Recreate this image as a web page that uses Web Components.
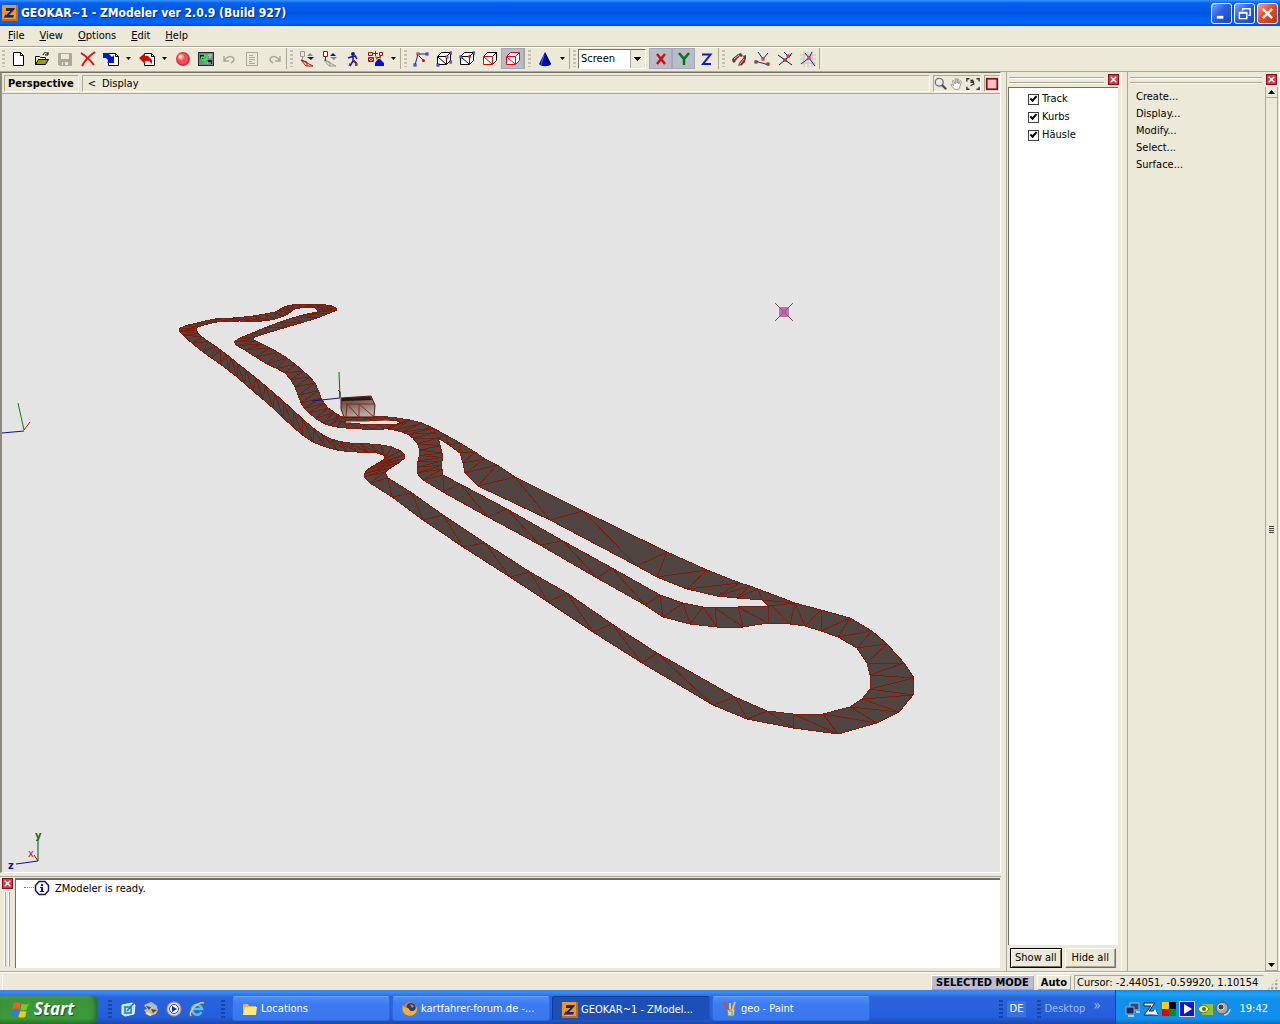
<!DOCTYPE html>
<html lang="en">
<head>
<meta charset="utf-8">
<title>GEOKAR~1 - ZModeler ver 2.0.9 (Build 927)</title>
<style>
  html, body { height: 100%; }
  body {
    margin: 0;
    font: 11px/14px "DejaVu Sans Condensed", "Noto Sans", sans-serif;
    color: #000;
    background: #ece9d8;
    overflow: hidden;
  }
</style>
</head>
<body>
<app-shell>
  <title-bar slot="title">GEOKAR~1 - ZModeler ver 2.0.9 (Build 927)</title-bar>
  <menu-bar slot="menu" items="File,View,Options,Edit,Help"></menu-bar>
  <tool-bar slot="tools"></tool-bar>
  <view-port slot="view"></view-port>
  <message-log slot="log">ZModeler is ready.</message-log>
  <dock-panel slot="objects">
    <object-list>
      <check-item>Track</check-item>
      <check-item>Kurbs</check-item>
      <check-item>Häusle</check-item>
    </object-list>
  </dock-panel>
  <dock-panel slot="commands">
    <command-list items="Create...,Display...,Modify...,Select...,Surface..."></command-list>
  </dock-panel>
  <status-bar slot="status"></status-bar>
  <task-bar slot="taskbar"></task-bar>
</app-shell>

<script>
// Base class: attaches an open root and fills it
class BaseElement extends HTMLElement {
  constructor() {
    super();
    this.attachShadow({ mode: 'open' });
  }

  connectedCallback() {
    this.shadowRoot.innerHTML = this.render();
  }
}

const ARROW = (x, y) => `<path d="M${x} ${y}h5l-2.5 3z" fill="#000"/>`;
const CUBE = (front, back) => `
  <path d="M1.500 5.500l4-4h9v8l-4 4M10.500 5.500l4-4" fill="#fff" stroke="${back}"/>
  <path d="M1.500 5.500h9v8h-9z" fill="#fff" stroke="${front}"/>
  <path d="M2 6l8 7" stroke="${front}"/>`;
const NODE = (x, y, c) => `<rect x="${x}" y="${y}" width="2" height="2" fill="#fff" stroke="${c}"/>`;
const ZLOGO = `
  <rect width="16" height="16" fill="#f09a1c"/>
  <path d="M0 14h16v2H0zM14 0h2v16h-2z" fill="#c86a10"/>
  <path d="M4 3h9l-1 2-5 5h5l-1 3H2l1-3 5-4H4z" fill="#20206c"/>
  <path d="M3 13h8M8 6l-4 4" stroke="#d8c8e0" stroke-width=".6"/>`;

const ICONS = {
  app: ZLOGO,
  new: '<path d="M2.500 1.500h7l3 3v10h-10zM9.500 1.500v3h3" fill="#fff" stroke="#000"/>',
  open: `<path d="M1.500 13.500v-8h4l1 1h5v2" fill="#ffffa0" stroke="#000"/>
    <path d="M1.500 13.500l3-5h10l-3 5z" fill="#9a9a18" stroke="#000"/>
    <path d="M9 4c1-3 3-3 5-1m0-2v3h-3" fill="none" stroke="#000"/>`,
  save: `<path d="M1.500 2.500h13v12h-12l-1-1z" fill="#aca899" stroke="#aca899"/>
    <path d="M4 3h8v5H4zM5 11h6v3H5z" fill="#ece9d8"/><path d="M6 11h2v3H6z" fill="#aca899"/>`,
  delete: '<path d="M1 2c5 3 9 7 13 12M15 1C9 5 5 9 2 15" fill="none" stroke="#e01010" stroke-width="2"/>',
  import: `<path d="M5.500 2.500h7l3 3v9h-10zM12.500 2.500v3h3" fill="#fff" stroke="#000"/>
    <path d="M0 2h5l4 4 2-2v8H4l2-2-3-3H0z" fill="#0018d8"/>`,
  export: `<path d="M5.500 2.500h7l3 3v9h-10zM12.500 2.500v3h3" fill="#fff" stroke="#000"/>
    <path d="M0 7l6-5v3h3l4 4v4l-3-3H6v3z" fill="#d00808"/>`,
  sphere: `<circle cx="8" cy="8" r="7" fill="#d83040"/><circle cx="7.500" cy="7.500" r="5.500" fill="#ec5058"/>
    <circle cx="6" cy="6" r="3" fill="#f89090"/><circle cx="5.500" cy="5.500" r="1.500" fill="#fff0f0"/>`,
  picture: `<rect x=".5" y="1.500" width="15" height="13" fill="#788888" stroke="#202828"/>
    <path d="M2 4h5v4H2zM10 9h4v4h-4z" fill="#102810"/>
    <path d="M3 8l1-2 2 1 1-3 2 1v3H7v5M4 9h4" fill="none" stroke="#30e850" stroke-width="1.500"/>
    <path d="M10 4h4M11 6h2M9 12h4" stroke="#d0f0d0"/>`,
  undo: '<path d="M3 5v5h5M3 10c3-5 8-6 10-2 0 2-1 3-3 4" fill="none" stroke="#aca899" stroke-width="1.500"/>',
  doc: '<path d="M2.500 1.500h11v13h-11zM5 4.500h4M5 6.500h6M5 8.500h6M5 10.500h3M5 12.500h6" fill="none" stroke="#aca899"/>',
  redo: '<path d="M13 5v5H8M13 10C10 5 5 4 3 8c0 2 1 3 3 4" fill="none" stroke="#aca899" stroke-width="1.500"/>',
  local1: `<path d="M1.500.5h4v5h-4zM3.500 6v4" fill="none" stroke="#989898"/>
    <path d="M2 9l12 6H7L2 9l6 2v4" fill="none" stroke="#c01010"/>
    <path d="M8 5l3-3 3 3z" fill="#8088a0"/><path d="M8 6h7l-3 3z" fill="#101860"/>`,
  local2: `<path d="M2 9l12 6H7L2 9l6 2v4" fill="none" stroke="#989898"/>
    <path d="M1.500.5h4v5h-4zM3.500 6v4" fill="#fff" stroke="#a01010"/>
    <path d="M8 5l3-3 3 3z" fill="#101860"/><path d="M8 6h7l-3 3z" fill="#8088a0"/>`,
  figure: `<circle cx="8" cy="3" r="2" fill="#1818a0"/>
    <path d="M3 7l3-1 4-1 2 3M8 5v5l-3 5M8 10l3 2v3" fill="none" stroke="#1818a0" stroke-width="1.500"/>
    <path d="M10 4l2 3M9 9l3 3v3M5 12l-1 3" fill="none" stroke="#c01818"/>`,
  crowd: `<path d="M.5 1.500h4v3h-4zM7.500 0v5M5 2.500h5M11.500 1.500h3v3h-3zM.5 6.500h5v4h-5zM1 7l4 3M5 7l-4 3M7 6l6 1M8 8l5-3" fill="none" stroke="#b01010"/>
    <path d="M7 15v-3l3-4h2l4 4v3z" fill="#0010d0"/>`,
  verts: `<path d="M2 14L5 3h9M6 5l5 5" fill="none" stroke="#1020c0"/>
    ${NODE(4, 2, '#c01010')}${NODE(13, 2, '#1020c0')}${NODE(1, 13, '#1020c0')}<circle cx="10.500" cy="9.500" r="1.500" fill="#c01010"/>`,
  cube1: CUBE('#000', '#000') + NODE(10, 5, '#e01010') + NODE(1, 13, '#1020c0') + NODE(14, 1, '#1020c0') + NODE(14, 10, '#1020c0'),
  cube2: CUBE('#000', '#000') + '<path d="M10.500 6v8" stroke="#1020e0"/>' + NODE(14, 1, '#1020c0') + NODE(1, 5, '#1020c0') + '<circle cx="10.500" cy="5.500" r="1.500" fill="#e01010"/>',
  cube3: CUBE('#c01010', '#000'),
  cube4: CUBE('#e00818', '#e00818'),
  cone: '<path d="M8 1l6 12c-2 3-10 3-12 0z" fill="#0010b8"/><path d="M8 1l2 14 3-1 1-1z" fill="#000868"/><path d="M7 4l-3 10" stroke="#4868ff"/>',
  x: '<path d="M4 3l8 10M12 3L4 13" stroke="#d01010" stroke-width="2.500"/>',
  y: '<path d="M3 2l5 6 5-6M8 8v6" fill="none" stroke="#087018" stroke-width="2.500"/>',
  z: '<path d="M3 3.500h8.500L4 13h8" fill="none" stroke="#1018d0" stroke-width="2"/>',
  magnet: `<path d="M3 11L1 8l6-5 2 2zM8 12l5-6 2 1-1 4-4 4z" fill="#a02020"/>
    <path d="M7 3l3-1 2 3-2 1zM12 5l3-1v4l-2-1zM2 8l3 2-2 2-2-2z" fill="#484444"/>
    <path d="M3 8l5-4M9 13l4-5" stroke="#f0b0b0"/><path d="M7 15l3-1-2-2z" fill="#606060"/>`,
  snap1: `<path d="M1 10l14 4M4 1l5 7 5-6" fill="none" stroke="#1020a0"/>${NODE(8, 7, '#c01010')}${NODE(1, 10, '#601010')}${NODE(13, 12, '#601010')}`,
  snap2: `<path d="M1 4l14 10M2 14l12-10M7 1l5 5 3-4" fill="none" stroke="#101060"/>${NODE(10, 4, '#c01010')}${NODE(7, 8, '#801010')}`,
  snap3: `<path d="M0 4h16M0 8h16M0 12h16M4 0v16M8 0v16M12 0v16" stroke="#c4c4c0"/>
    <path d="M1 13l8-6 6 8M5 2l4 5 3-6" fill="none" stroke="#1020c0"/>${NODE(8, 6, '#e01010')}`,
  zoom: `<circle cx="6" cy="6" r="4.500" fill="#e8eef0" stroke="#707070" stroke-width="1.500"/>
    <path d="M9 9l5 5" stroke="#505050" stroke-width="2.500"/>`,
  hand: '<path d="M5 14l-4-5 1-1 2 2-1-6h1l2 4V2h2v5l1-5 1 1v5l2-4 1 1-2 7-1 2z" fill="#fff" stroke="#909088"/>',
  extents: '<path d="M1 5V2h3M12 2h3v3M15 11v3h-3M4 14H1v-3M5 4h3M5 6h3l1 2-4 2M7 3l2 3" fill="none" stroke="#303030" stroke-width="1.500"/>',
  maximize: '<rect x="2" y="2" width="12" height="12" fill="#ffc0c8" stroke="#801018" stroke-width="2"/>',
  info: `<path d="M5 1.500h6l3.500 4v5l-3.500 4H5l-3.500-4v-5z" fill="#fff" stroke="#14146c" stroke-width="1.500"/>
    <path d="M7 4h2v2H7zM6 7h3v4h1v1H6v-1h1V8H6z" fill="#1414b0"/>`,
  flag: `<path d="M2 3c2-2 4-1 6 0l-1 5C5 7 3 6 1 8z" fill="#f06020"/><path d="M9 3c2 1 4 1 6 0l-2 5c-2 1-3 1-5 0z" fill="#80c820"/>
    <path d="M1 9c2-2 4-1 6 0l-2 5C4 13 2 12 0 14z" fill="#3078f0"/><path d="M8 9c2 1 4 1 5 0l-1 5c-2 1-4 1-6 0z" fill="#f8c818"/>`,
  desktop: '<path d="M2 4l10-2 3 2-1 9-9 2-3-2z" fill="#b8e4f8" stroke="#e8f8ff"/><path d="M5 6h6v6H5zM7 10l7-8" fill="none" stroke="#2878a8" stroke-width="1.500"/>',
  bird: `<path d="M1 4l7-3 5 3 2 5-2 4-6 2-4-3-2-3 3-1z" fill="#c8bca8"/><path d="M3 5l5 1-2 3zM8 8l6 1-4 3z" fill="#484858"/>
    <path d="M8 2l6 4" stroke="#90b8e8" stroke-width="2"/><path d="M3 12l5 2" stroke="#f8e8a0" stroke-width="2"/>`,
  player: '<circle cx="8" cy="8" r="7" fill="#c8dcf4" stroke="#e08850"/><circle cx="8" cy="8" r="4.500" fill="#fff" stroke="#3858a8"/><path d="M6 5l5 3-5 3z" fill="#1030a0"/>',
  ie: '<path d="M12.500 11a5 5 0 1 1 .5-3H4" fill="none" stroke="#58c0f8" stroke-width="2.500"/><path d="M2 15C-1 11 9 0 15 2" fill="none" stroke="#f0d050" stroke-width="1.500"/>',
  folder: '<path d="M1 3h5l1 2h7v9H1z" fill="#e8b838"/><path d="M3 6h12l-1 8H1z" fill="#ffe888"/>',
  firefox: '<circle cx="8" cy="8" r="7" fill="#e87818"/><circle cx="9" cy="6.500" r="4.500" fill="#283878"/><path d="M1 3c0 4 3 3 5 4s1 3 4 3 4-2 5-5c1 8-5 11-10 9S0 8 1 3z" fill="#f8b030"/><path d="M8 3l4 2-2 2z" fill="#70b0e0"/>',
  paint: '<path d="M5 8h8l-1 7H6z" fill="#c8d8e0" stroke="#708090"/><path d="M2 1l5 8" stroke="#e04828" stroke-width="2"/><path d="M8 2v6" stroke="#f0d040" stroke-width="2"/><path d="M13 1l-3 9" stroke="#e8b890" stroke-width="2"/><path d="M7 10h3v4" fill="none" stroke="#50a050"/>',
  network: '<path d="M5 2h9v7H5z" fill="#304880" stroke="#a8b8d8"/><path d="M1 6h8v7H1z" fill="#182858" stroke="#90a8d0"/><path d="M3 15h6M11 11h4" stroke="#d8e0f0" stroke-width="1.500"/>',
  zonealarm: '<path d="M1 2h11L6 10h7l2 4H1l7-9H1z" fill="#e8f0ff" stroke="#182048"/><path d="M9 13l3-5 3 6z" fill="#fff"/>',
  blocks: '<path d="M1 1h7v7H1z" fill="#f8d000"/><path d="M8 1h7v7H8z" fill="#000"/><path d="M1 8h7v7H1z" fill="#d80808"/><path d="M8 8h7v7H8z" fill="#089018"/>',
  play: '<rect x=".5" y=".5" width="15" height="15" fill="#1018c8" stroke="#d8e0f8"/><path d="M5 3l8 5-8 5z" fill="#fff"/>',
  nvidia: '<path d="M5 3h11v11H5z" fill="#98c028"/><path d="M1 8c3-5 8-5 11 0-3 5-8 5-11 0z" fill="#e8f0b8" stroke="#608010"/><circle cx="7" cy="8" r="2" fill="#507010"/>',
  volume: '<circle cx="7" cy="7" r="6" fill="#a8a8a8" stroke="#585858"/><circle cx="6" cy="6" r="3" fill="#404040" stroke="#d8d8d8"/><path d="M9 14c3 0 6-3 6-6" fill="none" stroke="#c8d8f0" stroke-width="1.500"/>',
  close: '<path d="M3 3l10 10M13 3L3 13" stroke="#fff" stroke-width="2.500"/>',
  minimize: '<path d="M3 12h7" stroke="#fff" stroke-width="3"/>',
  restore: '<path d="M6 5V3h8v7h-2M2.500 7.500h8v6h-8zM2 7h9" fill="none" stroke="#fff" stroke-width="1.500"/>',
};

class UiIcon extends BaseElement {
  render() {
    return `
      <style>
        :host { display: inline-block; width: 16px; height: 16px; flex: none; }
        svg { display: block; width: 100%; height: 100%; }
      </style>
      <svg viewBox="0 0 16 16" aria-hidden="true">${ICONS[this.getAttribute('name')] || ''}</svg>
    `;
  }
}

class AppShell extends BaseElement {
  render() {
    return `
      <style>
        :host { display: flex; flex-direction: column; height: 100vh; }
        main {
          flex: 1;
          min-height: 0;
          display: grid;
          grid-template-columns: minmax(0, 1fr) 116px 153px;
          column-gap: 5px;
          border-top: 1px solid #aca899;
        }
        .left { display: flex; flex-direction: column; min-height: 0; }
        ::slotted(view-port) { flex: 1; }
      </style>
      <slot name="title"></slot>
      <slot name="menu"></slot>
      <slot name="tools"></slot>
      <main>
        <div class="left">
          <slot name="view"></slot>
          <slot name="log"></slot>
        </div>
        <slot name="objects"></slot>
        <slot name="commands"></slot>
      </main>
      <slot name="status"></slot>
      <slot name="taskbar"></slot>
    `;
  }
}

class TitleBar extends BaseElement {
  render() {
    return `
      <style>
        :host {
          display: flex;
          align-items: center;
          height: 26px;
          padding: 0 2px;
          gap: 2px;
          color: #fff;
          background: linear-gradient(#3a93ff, #0560f0 12%, #0054e3 50%, #0062fa 75%, #0066ff 88%, #0048c8);
        }
        h1 {
          flex: 1;
          margin: 0 0 0 1px;
          font: bold 12px/18px "DejaVu Sans Condensed", sans-serif;
          text-shadow: 1px 1px #0a2a80;
        }
        button {
          width: 21px;
          height: 21px;
          padding: 2px;
          border: 1px solid #fff;
          border-radius: 3px;
          background: linear-gradient(135deg, #7ea4f4, #2b5ee0 45%, #1a48c8);
        }
        button.close { background: linear-gradient(135deg, #f4a088, #e0502c 45%, #c03410); }
        ui-icon { display: block; width: 15px; height: 15px; }
        .logo { width: 16px; height: 16px; }
      </style>
      <ui-icon class="logo" name="app"></ui-icon>
      <h1><slot></slot></h1>
      <button aria-label="Minimize"><ui-icon name="minimize"></ui-icon></button>
      <button aria-label="Restore"><ui-icon name="restore"></ui-icon></button>
      <button class="close" aria-label="Close"><ui-icon name="close"></ui-icon></button>
    `;
  }
}

class MenuBar extends BaseElement {
  render() {
    const items = this.getAttribute('items').split(',');
    return `
      <style>
        :host { display: block; border-bottom: 1px solid #aca899; }
        nav { display: flex; height: 20px; align-items: center; }
        button { font: inherit; border: 0; background: none; padding: 0 7px 0 8px; }
      </style>
      <nav>${items.map((t) => `<button><u>${t[0]}</u>${t.slice(1)}</button>`).join('')}</nav>
    `;
  }
}

class ToolGroup extends BaseElement {
  render() {
    return `
      <style>
        :host { display: flex; align-items: center; height: 21px; border-right: 1px solid #aca899; }
        i {
          width: 3px;
          height: 17px;
          margin: 0 2px;
          background: repeating-linear-gradient(#c4c0b0 0 2px, transparent 2px 4px);
        }
      </style>
      <i></i><slot></slot>
    `;
  }
}

class ToolButton extends BaseElement {
  render() {
    const icon = this.getAttribute('icon');
    return `
      <style>
        :host { display: flex; }
        button { border: 0; padding: 0; background: none; height: 21px; color: #000; }
        .main { width: 23px; display: flex; align-items: center; justify-content: center; }
        .main.on { background: #b8bcc8; border: 1px solid #a4a8b8; }
        .drop { width: 13px; }
        .drop svg { display: block; margin: auto; }
      </style>
      <button class="main ${this.hasAttribute('on') ? 'on' : ''}" aria-label="${icon}"><ui-icon name="${icon}"></ui-icon></button>
      ${this.hasAttribute('drop') ? `<button class="drop" aria-label="${icon} options"><svg width="5" height="3">${ARROW(0, 0)}</svg></button>` : ''}
    `;
  }
}

class ToolBar extends BaseElement {
  // "!" marks a pressed button, "+" one with a drop-down arrow
  buttons(list) {
    return list.split(' ').map((n) => {
      const flags = (n.includes('!') ? ' on' : '') + (n.includes('+') ? ' drop' : '');
      return `<tool-button icon="${n.replace(/[!+]/g, '')}"${flags}></tool-button>`;
    }).join('');
  }

  render() {
    return `
      <style>
        :host {
          display: flex;
          align-items: flex-start;
          gap: 1px;
          height: 23px;
          border-top: 1px solid #fff;
        }
        select {
          appearance: none;
          width: 68px;
          height: 20px;
          margin-right: 3px;
          padding: 0 2px;
          font: inherit;
          color: #000;
          border: 1px solid;
          border-color: #716f64 #fff #fff #716f64;
          border-radius: 0;
          background:
            linear-gradient(#000, #000) right 7px top 10px / 1px 1px no-repeat,
            linear-gradient(#000, #000) right 6px top 9px / 3px 1px no-repeat,
            linear-gradient(#000, #000) right 5px top 8px / 5px 1px no-repeat,
            linear-gradient(#000, #000) right 4px top 7px / 7px 1px no-repeat,
            linear-gradient(90deg, #aca899 1px, #ece9d8 1px) right / 15px 100% no-repeat,
            #fff;
        }
      </style>
      <tool-group>${this.buttons('new open save delete import+ export+ sphere picture undo doc redo')}</tool-group>
      <tool-group>${this.buttons('local1 local2 figure crowd+')}</tool-group>
      <tool-group>${this.buttons('verts cube1 cube2 cube3 cube4!')}</tool-group>
      <tool-group>${this.buttons('cone+')}</tool-group>
      <tool-group>
        <select aria-label="Axes"><option>Screen</option></select>
        ${this.buttons('x! y! z')}
      </tool-group>
      <tool-group>${this.buttons('magnet snap1 snap2 snap3')}</tool-group>
    `;
  }
}

// Road strips: each row is one cross-section, x1 y1 x2 y2
const STRIPS = [
  [ // outer road, from the far hairpin round to the big curve
    [337,310,318,312],[332,306,315,308],[313,304,300,308],[292,305,293,310],[282,308,288,314],
    [275,312,275,319],[253,316,262,321],[233,318,240,321],[215,319,217,322],[197,323,198,327],
    [180,328,197,331],[183,335,202,337],[203,352,215,346],[220,364,226,354],[237,377,237,363],
    [253,391,256,378],[273,408,275,394],[293,427,293,410],[313,442,313,428],[337,450,331,439],
    [357,452,350,443],[377,453,370,444],[385,457,392,447],[380,462,405,455],[367,470,400,462],
    [364,477,385,472],[370,483,388,478],[392,497,412,493],[423,520,443,515],[463,547,485,543],
    [510,577,530,572],[548,602,567,593],[593,632,612,624],[642,663,657,653],[713,705,735,697],
    [747,719,767,711],[793,728,793,714],[838,734,823,714],[877,723,850,707],[899,712,862,699],
    [913,695,870,689],[914,678,870,675],[904,663,867,663],[887,644,857,648],[872,631,838,637],
    [850,618,821,631],[821,610,805,626],[795,603,790,624],[768,602,768,623],
  ],
  [ // inner road
    [768,606,768,623],[738,607,743,627],[715,608,717,627],[703,607,690,624],[683,603,663,617],
    [660,595,645,605],[612,568,597,578],[563,541,540,545],[507,509,488,517],[460,484,443,492],
    [443,475,423,480],[442,469,417,473],[442,461,418,461],[442,453,420,450],[438,438,413,438],
    [433,428,402,432],[410,420,388,429],[397,424,385,429],[360,424,360,429],[343,421,337,427],
    [340,416,323,423],[328,408,309,413],[321,398,301,403],[315,383,295,387],[303,371,285,373],
    [287,358,267,364],[270,348,245,350],[256,341,234,342],[255,337,250,334],[287,327,280,322],
    [317,318,303,315],[337,310,317,312],
  ],
  [ // wide straight
    [433,428,438,438],[460,443,460,453],[475,452,463,463],[485,459,465,473],[497,465,478,486],
    [515,477,550,520],[583,511,637,566],[667,552,657,577],[707,570,687,589],[740,583,717,596],
    [750,586,737,598],[758,589,762,600],[795,603,768,606],
  ],
  [ // cut behind the house
    [336,415,338,421],[343,417,346,421],[370,418,370,421],[380,416,397,421],[410,420,400,424],
  ],
];

// The far end is tessellated twice as finely as the rest
const refine = (rows) => {
  const out = [];
  rows.forEach((row, i) => {
    out.push(row);
    const next = rows[i + 1];
    if (!next || row[1] > 480 || next[1] > 480 || row[0] > 442) return;
    const before = rows[i - 1] || row;
    const after = rows[i + 2] || next;
    out.push(row.map((v, k) => (9 * (v + next[k]) - before[k] - after[k]) / 16));
  });
  return out;
};

class ViewPort extends BaseElement {
  strip(source) {
    const rows = refine(source);
    let d = '';
    for (let i = 0; i < rows.length - 1; i++) {
      const [ax, ay, bx, by] = rows[i];
      const [cx, cy, dx, dy] = rows[i + 1];
      d += `M${ax} ${ay}L${cx} ${cy} ${bx} ${by}ZM${cx} ${cy}L${dx} ${dy} ${bx} ${by}Z`;
    }
    return `<path d="${d}"/>`;
  }

  render() {
    return `
      <style>
        :host {
          display: flex;
          flex-direction: column;
          min-height: 0;
          border: solid;
          border-width: 1px 1px 1px 2px;
          border-color: #716f64 #fff #fff #8c897c;
        }
        header { display: flex; gap: 3px; height: 20px; padding: 2px 0 1px 2px; box-sizing: border-box; }
        header > * {
          box-sizing: border-box;
          display: flex;
          align-items: center;
          border: 1px solid;
          border-color: #aca899 #fff #fff #aca899;
        }
        h2 { margin: 0; padding: 0 4px 0 3px; font-size: 11px; line-height: 14px; }
        .path { flex: 1; padding: 0 5px; gap: 6px; }
        button { font: inherit; color: #000; padding: 0; border: 0; background: none; display: flex; }
        .nav { gap: 2px; }
        header ui-icon { width: 14px; height: 14px; }
        svg { flex: 1; min-height: 0; width: 100%; background: #e4e4e4; border-top: 1px solid #aca899; }
        .road path { fill: #514541; stroke: #801c0c; stroke-width: 1; stroke-linejoin: bevel; }
        text { font: bold 11px "DejaVu Sans Condensed", sans-serif; }
      </style>
      <header>
        <h2>Perspective</h2>
        <div class="path"><button aria-label="Back">&lt;</button><button>Display</button></div>
        <div class="nav">
          <button aria-label="Zoom"><ui-icon name="zoom"></ui-icon></button>
          <button aria-label="Pan"><ui-icon name="hand"></ui-icon></button>
          <button aria-label="Fit"><ui-icon name="extents"></ui-icon></button>
        </div>
        <div><button aria-label="Maximize view"><ui-icon name="maximize"></ui-icon></button></div>
      </header>
      <svg viewBox="2 94 998 778" preserveAspectRatio="xMinYMin meet">
        <defs>
          <linearGradient id="wall" x1="0" y1="0" x2=".4" y2="1">
            <stop offset="0" stop-color="#483028"/>
            <stop offset="1" stop-color="#b8aaa8"/>
          </linearGradient>
        </defs>
        <g class="road" shape-rendering="crispEdges">${STRIPS.map(this.strip).join('')}</g>
        <path d="M346 422h20l20-1 10 1" fill="none" stroke="#f0e4d8"/>
        <path d="M341 398l30-2 4 9-1 12h-30l-3-8z" fill="url(#wall)" stroke="#501810"/>
        <path d="M342 398l28-1 2 3-30 1z" fill="#301410"/>
        <path d="M346 417l1-13 12 13v-13l15 13M346 404h28" fill="none" stroke="#8c2818"/>
        <g fill="none">
          <path d="M340 397l-1-25" stroke="#087010"/>
          <path d="M340 398l-28 3" stroke="#101090"/>
          <path d="M340 398v-6l-2-2" stroke="#201010"/>
          <path d="M24 430l-6-27" stroke="#107818"/>
          <path d="M24 431l-22 2" stroke="#101080"/>
          <path d="M24 430l6-8" stroke="#902020"/>
          <path d="M38 861v-22" stroke="#085010"/>
          <path d="M38 861l-22 3" stroke="#101090"/>
          <path d="M38 861l-4-6" stroke="#801818"/>
        </g>
        <rect x="779" y="307" width="10" height="10" fill="#c070b0"/>
        <path d="M775 303l18 18M793 303l-18 18" stroke="#8c5058"/>
        <text x="35" y="839" fill="#087010">y</text>
        <text x="28" y="857" fill="#c01010" style="font-weight: normal">x</text>
        <text x="8" y="869" fill="#1010b0">z</text>
      </svg>
    `;
  }
}

class CloseBox extends BaseElement {
  render() {
    return `
      <style>
        :host { display: block; flex: none; }
        button {
          display: block;
          width: 11px;
          height: 11px;
          padding: 0;
          border: 1px solid #801020;
          background: #d83848;
        }
        ui-icon { display: block; width: 9px; height: 9px; }
      </style>
      <button aria-label="Close panel"><ui-icon name="close"></ui-icon></button>
    `;
  }
}

class MessageLog extends BaseElement {
  render() {
    return `
      <style>
        :host { display: flex; height: 94px; margin-top: 3px; border-top: 1px solid #aca899; }
        .side { width: 15px; display: flex; flex-direction: column; align-items: center; padding-top: 1px; gap: 3px; }
        .grip { flex: 1; width: 3px; margin-bottom: 4px; border: solid #aca899; border-width: 0 1px; box-shadow: -1px 0 #fff, inset -1px 0 #fff; }
        .list {
          flex: 1;
          margin: 1px 1px 3px 0;
          background: #fff;
          border: solid #716f64;
          border-width: 2px 0 0 1px;
          display: flex;
          align-items: flex-start;
          padding-left: 8px;
        }
        .dots { width: 10px; border-top: 1px dotted #808080; margin-top: 7px; }
        p { margin: 0 0 0 5px; line-height: 17px; }
      </style>
      <div class="side"><close-box></close-box><div class="grip"></div></div>
      <div class="list">
        <span class="dots"></span>
        <ui-icon name="info"></ui-icon>
        <p><slot></slot></p>
      </div>
    `;
  }
}

class DockPanel extends BaseElement {
  render() {
    return `
      <style>
        :host {
          display: flex;
          flex-direction: column;
          min-height: 0;
          box-sizing: border-box;
          border-left: 1px solid #aca899;
          border-right: 1px solid #fff;
        }
        header { display: flex; align-items: center; gap: 4px; height: 15px; padding: 0 2px; }
        .grip { flex: 1; height: 4px; border: solid #aca899; border-width: 1px 0; box-shadow: 0 1px #fff, inset 0 1px #fff; }
        ::slotted(*) { flex: 1; min-height: 0; }
      </style>
      <header><div class="grip"></div><close-box></close-box></header>
      <slot></slot>
    `;
  }
}

class ObjectList extends BaseElement {
  render() {
    return `
      <style>
        :host { display: flex; flex-direction: column; padding: 0 3px 3px 1px; }
        .list {
          flex: 1;
          background: #fff;
          border: solid #716f64;
          border-width: 1px 0 0 1px;
          padding: 2px 0 0 19px;
        }
        footer { display: flex; gap: 3px; padding: 3px 2px 0; }
        button {
          flex: 1;
          height: 20px;
          padding: 0;
          font: inherit;
          color: #000;
          white-space: nowrap;
          background: #ece9d8;
          border: 1px solid;
          border-color: #fff #716f64 #716f64 #fff;
          box-shadow: inset -1px -1px #aca899;
        }
        button.default { border-color: #000; box-shadow: inset 1px 1px #fff, inset -1px -1px #716f64; }
      </style>
      <div class="list"><slot></slot></div>
      <footer><button class="default">Show all</button><button>Hide all</button></footer>
    `;
  }
}

class CheckItem extends BaseElement {
  render() {
    return `
      <style>
        :host { display: block; }
        label { display: flex; align-items: center; gap: 3px; height: 18px; }
        input {
          appearance: none;
          flex: none;
          width: 11px;
          height: 11px;
          margin: 0;
          border: 1px solid #404040;
          background: #fff;
          display: grid;
          place-items: center;
        }
        input:checked::after {
          content: "";
          width: 5px;
          height: 2px;
          border: solid #000;
          border-width: 0 0 2px 2px;
          transform: translateY(-1px) rotate(-48deg);
        }
      </style>
      <label><input type="checkbox" checked><slot></slot></label>
    `;
  }
}

class CommandList extends BaseElement {
  render() {
    const items = this.getAttribute('items').split(',');
    return `
      <style>
        :host { display: flex; }
        ul { flex: 1; margin: 0; padding: 1px 0 0 8px; list-style: none; }
        li { height: 17px; display: flex; align-items: center; }
        button { font: inherit; color: #000; border: 0; padding: 0; background: none; }
        .scroll {
          width: 11px;
          margin-right: 1px;
          display: flex;
          flex-direction: column;
          justify-content: space-between;
          align-items: stretch;
          border: solid;
          border-width: 0 1px;
          border-color: #fff #aca899;
        }
        .scroll button { height: 11px; display: grid; place-items: center; border-bottom: 1px solid #aca899; }
        .thumb { width: 5px; height: 7px; align-self: center; background: repeating-linear-gradient(#404040 0 1px, transparent 1px 2px); }
      </style>
      <ul>${items.map((t) => `<li><button>${t}</button></li>`).join('')}</ul>
      <div class="scroll">
        <button aria-label="Up"><svg width="7" height="4"><path d="M0 4h7L3.500 0z"/></svg></button>
        <div class="thumb"></div>
        <button aria-label="Down"><svg width="7" height="4"><path d="M0 0h7L3.500 4z"/></svg></button>
      </div>
    `;
  }
}

class StatusBar extends BaseElement {
  render() {
    return `
      <style>
        :host {
          display: flex;
          justify-content: flex-end;
          gap: 3px;
          height: 19px;
          padding: 3px 2px 1px;
          box-sizing: border-box;
          border-top: 1px solid #aca899;
          box-shadow: inset 0 1px #fff;
        }
        span { display: flex; align-items: center; box-sizing: border-box; height: 15px; }
        .rest { flex: 1; border-left: 1px solid #fff; }
        .mode, .auto { font-weight: bold; padding: 0 4px; border: 1px solid; border-color: #fff #aca899 #aca899 #fff; }
        .mode { background: #bcbcd4; }
        .auto { padding: 0 3px; }
        .cursor { width: 190px; padding-left: 2px; border: 1px solid; border-color: #aca899 transparent transparent #aca899; }
        .size { width: 11px; height: 15px; background: radial-gradient(circle at 1px 1px, #aca899 1px, transparent 2px) 0 0 / 4px 4px; clip-path: polygon(100% 20%, 100% 100%, 0 100%); }
      </style>
      <span class="rest"></span>
      <span class="mode">SELECTED MODE</span>
      <span class="auto">Auto</span>
      <span class="cursor">Cursor: -2.44051, -0.59920, 1.10154</span>
      <span class="size"></span>
    `;
  }
}

class TaskButton extends BaseElement {
  render() {
    return `
      <style>
        :host { display: block; flex: 0 1 158px; min-width: 0; }
        button {
          display: flex;
          align-items: center;
          gap: 3px;
          width: 100%;
          height: 25px;
          padding: 0 9px;
          font: inherit;
          color: #fff;
          text-align: left;
          white-space: nowrap;
          border: 1px solid #3068d8;
          border-top-color: #68a0f8;
          border-radius: 3px;
          background: linear-gradient(#4c8ef8, #3c7cf0 30%, #3878ec);
        }
        button.active { background: #1c50b8; border-color: #143c90 #2458c0 #2458c0 #143c90; padding-top: 2px; }
      </style>
      <button class="${this.hasAttribute('active') ? 'active' : ''}">
        <ui-icon name="${this.getAttribute('icon')}"></ui-icon><span><slot></slot></span>
      </button>
    `;
  }
}

class TaskBar extends BaseElement {
  render() {
    const icons = (list) => list.map((n) => `<button aria-label="${n}"><ui-icon name="${n}"></ui-icon></button>`).join('');
    return `
      <style>
        :host {
          display: flex;
          align-items: center;
          height: 34px;
          color: #fff;
          background: linear-gradient(#3a82e8, #3c88f0 8%, #2a64dc 20%, #245edb 80%, #1c48a8);
        }
        button { border: 0; padding: 0; background: none; color: inherit; display: flex; }
        .start {
          align-self: stretch;
          align-items: center;
          gap: 4px;
          width: 98px;
          margin: 5px 0 0;
          padding: 0 0 1px 11px;
          font: italic bold 17px/20px "Noto Sans", sans-serif;
          text-shadow: 1px 1px 1px #1c4c1c;
          border-radius: 0 8px 8px 0;
          background: linear-gradient(#5cac5c, #3c943c 15%, #3a9a3a 80%, #287828);
          box-shadow: inset -3px 0 4px #2a6c2a;
        }
        .start ui-icon { width: 19px; height: 19px; }
        .grip { width: 4px; height: 18px; margin-top: 4px; background: repeating-linear-gradient(#1844a8 0 2px, transparent 2px 4px); }
        .quick { display: flex; gap: 7px; padding: 3px 16px 0 8px; }
        .start + .grip { margin-left: 10px; }
        .tasks { flex: 1; display: flex; gap: 2px; padding: 3px 7px 0; min-width: 0; }
        .lang { padding: 0 3px; margin: 3px 11px 0 4px; line-height: 16px; background: #3c70dc; }
        .desktop { display: flex; margin: 3px 0 0 3px; color: #a0bcf4; gap: 8px; }
        .desktop b { font-size: 14px; font-weight: normal; line-height: 6px; }
        .tray {
          align-self: stretch;
          display: flex;
          align-items: center;
          gap: 2px;
          box-sizing: border-box;
          width: 165px;
          margin-left: 14px;
          padding: 4px 12px 0 9px;
          border-left: 1px solid #1048a0;
          background: linear-gradient(#1880e0, #1ca4f4 10%, #1290e8 30%, #1090ec 85%, #0c68c0);
        }
        time { margin-left: auto; }
      </style>
      <button class="start"><ui-icon name="flag"></ui-icon>Start</button>
      <div class="grip"></div>
      <div class="quick">${icons(['desktop', 'bird', 'player', 'ie'])}</div>
      <div class="grip"></div>
      <div class="tasks">
        <task-button icon="folder">Locations</task-button>
        <task-button icon="firefox">kartfahrer-forum.de -...</task-button>
        <task-button icon="app" active>GEOKAR~1 - ZModel...</task-button>
        <task-button icon="paint">geo - Paint</task-button>
      </div>
      <div class="grip"></div>
      <span class="lang">DE</span>
      <div class="grip"></div>
      <span class="desktop">Desktop <b>»</b></span>
      <div class="tray">
        ${icons(['network', 'zonealarm', 'blocks', 'play', 'nvidia', 'volume'])}
        <time>19:42</time>
      </div>
    `;
  }
}

customElements.define('ui-icon', UiIcon);
customElements.define('close-box', CloseBox);
customElements.define('title-bar', TitleBar);
customElements.define('menu-bar', MenuBar);
customElements.define('tool-group', ToolGroup);
customElements.define('tool-button', ToolButton);
customElements.define('tool-bar', ToolBar);
customElements.define('view-port', ViewPort);
customElements.define('message-log', MessageLog);
customElements.define('dock-panel', DockPanel);
customElements.define('object-list', ObjectList);
customElements.define('check-item', CheckItem);
customElements.define('command-list', CommandList);
customElements.define('status-bar', StatusBar);
customElements.define('task-button', TaskButton);
customElements.define('task-bar', TaskBar);
customElements.define('app-shell', AppShell);
</script>
</body>
</html>
